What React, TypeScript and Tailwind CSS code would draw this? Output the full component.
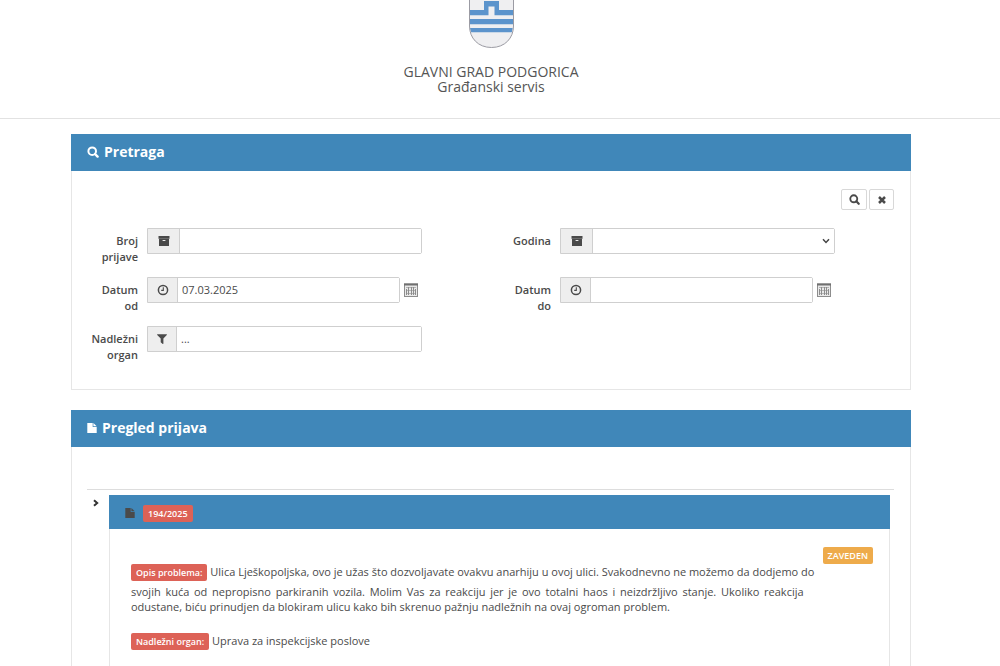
import type { ReactNode } from "react";

type FieldProps = {
  id: string;
  label: string;
  icon: ReactNode;
  children: ReactNode;
  after?: ReactNode;
};

const inputClass =
  "h-full w-full min-w-0 bg-white px-1 pb-0.5 text-[11px] text-[#4a4a4a] outline-none";

function SearchIcon({ className }: { className?: string }) {
  return (
    <svg viewBox="0 0 12 12" className={className} aria-hidden="true">
      <circle cx="5.2" cy="5.2" r="3.8" fill="none" stroke="currentColor" strokeWidth="2" />
      <path d="M8 8 10.6 10.6" stroke="currentColor" strokeWidth="2.4" strokeLinecap="round" />
    </svg>
  );
}

function CloseIcon() {
  return (
    <svg viewBox="0 0 10 10" className="size-2.5" aria-hidden="true">
      <path d="M2 2 8 8M8 2 2 8" stroke="currentColor" strokeWidth="2.5" />
    </svg>
  );
}

function ArchiveIcon() {
  return (
    <svg viewBox="0 0 12 12" className="size-3" fill="currentColor" aria-hidden="true">
      <path d="M0.5 1h11v2.8h-11z" />
      <path fillRule="evenodd" d="M1 4.1h10V11H1zM4.6 5.1v.8h2.8v-.8z" />
    </svg>
  );
}

function ClockIcon() {
  return (
    <svg viewBox="0 0 12 12" className="size-3" fill="none" stroke="currentColor" aria-hidden="true">
      <circle cx="6" cy="6" r="4.6" strokeWidth="1.5" />
      <path d="M6.3 3.2v3.2H4.2" strokeWidth="1.1" />
    </svg>
  );
}

function FilterIcon() {
  return (
    <svg viewBox="0 0 12 12" className="size-3" fill="currentColor" aria-hidden="true">
      <path d="M1.4 1.2h9.2q.7.2.2.8L7.4 5.6v5q-.1.6-.7.3L4.7 9.3V5.6L1.2 2q-.4-.6.2-.8z" />
    </svg>
  );
}

function FileIcon() {
  return (
    <svg viewBox="0 0 10 10" className="size-2.5" fill="currentColor" aria-hidden="true">
      <path d="M.3 0h5.4v3.9h4V10H.3z" />
      <path d="M6.4 0 9.7 3.2H6.4z" />
    </svg>
  );
}

function CalendarIcon() {
  return (
    <svg viewBox="0 0 14 14" className="size-3.5" aria-hidden="true">
      <rect x="0.5" y="1" width="13" height="12.5" fill="#e9e9e9" stroke="#8d8d8d" />
      <path d="M0 1.5h14" stroke="#707070" strokeWidth="2" />
      <path d="M2 4.5h10M2 7.5h10M2 10.5h10" stroke="#b5b5b5" />
      <path d="M2.5 6v6M4.5 4v8M7.5 4v8M9.5 4v8M11.5 6v6" stroke="#8d8d8d" />
    </svg>
  );
}

function Crest() {
  return (
    <svg viewBox="0 0 45 48" className="h-12 w-[45px]" role="img" aria-label="Grb Podgorice">
      <path d="M.5 0v26C.5 38 9 47.5 22.5 47.5S44.5 38 44.5 26V0z" fill="#efeff1" />
      <path
        d="M1 10h14V1h15v9h14v5.2H25.5V6.5h-6v8.7H1zM1 19h43v5.2H1zM1 28h42.7q-.3 2.2-.9 4.2H2.2Q1.3 30 1 28z"
        fill="#5c94cc"
      />
      <path d="M.5 0v26C.5 38 9 47.5 22.5 47.5S44.5 38 44.5 26V0" fill="none" stroke="#9b9ba3" />
    </svg>
  );
}

function Field({ id, label, icon, children, after }: FieldProps) {
  return (
    <div className="flex items-start gap-[9px]">
      <label htmlFor={id} className="w-[51px] shrink-0 pt-[5px] text-right font-semibold leading-4">
        {label}
      </label>
      <div className="flex min-w-0 flex-1 items-center gap-1">
        <div className="flex h-[26px] min-w-0 flex-1 rounded-r-xs border border-[#cfcfcf]">
          {icon}
          {children}
        </div>
        {after}
      </div>
    </div>
  );
}

function PanelHeader({ icon, title }: { icon: ReactNode; title: string }) {
  return (
    <h2 className="flex h-[37px] items-center gap-[5px] bg-[#4087b9] px-4 pb-0.5 text-[14px] font-bold text-white">
      {icon}
      {title}
    </h2>
  );
}

function DateButton({ label }: { label: string }) {
  return (
    <button type="button" aria-label={label} className="mr-1 shrink-0">
      <CalendarIcon />
    </button>
  );
}

const addon = "flex shrink-0 items-center justify-center border-r border-[#cfcfcf] bg-[#eeeeee]";
const tag = "inline-block rounded-xs bg-[#dd6257] px-[5px] text-[9px] font-semibold leading-[17px] text-white";

export default function App() {
  return (
    <div className="bg-white font-['Open_Sans',sans-serif] text-[11px] text-[#4a4a4a]">
      <header className="border-b border-[#e2e2e2] pr-[18px] pb-6">
        <div className="flex flex-col items-center">
          <Crest />
          <h1 className="mt-4 text-center text-[14px] leading-[15px] text-[#555555]">
            GLAVNI GRAD PODGORICA
            <br />
            Građanski servis
          </h1>
        </div>
      </header>

      <main className="pt-[15px] pr-[89px] pl-[71px]">
        <section>
          <PanelHeader icon={<SearchIcon className="size-3" />} title="Pretraga" />
          <form
            className="border-x border-b border-[#e6e6e6] pt-[18px] pr-4 pb-[26px] pl-[15px]"
            onSubmit={(e) => e.preventDefault()}
          >
            <div className="flex justify-end gap-0.5">
              <button
                type="submit"
                aria-label="Pretraži"
                className="flex h-[21px] w-[26px] items-center justify-center rounded-xs border border-[#d8d8d8]"
              >
                <SearchIcon className="size-[11px]" />
              </button>
              <button
                type="reset"
                aria-label="Poništi"
                className="flex h-[21px] w-[25px] items-center justify-center rounded-xs border border-[#d8d8d8]"
              >
                <CloseIcon />
              </button>
            </div>

            <div className="mt-[18px] grid grid-cols-2 gap-x-[78px] gap-y-3 pr-[59px]">
              <Field id="broj" label="Broj prijave" icon={<span className={`${addon} w-8`}><ArchiveIcon /></span>}>
                <input id="broj" type="text" className={inputClass} />
              </Field>
              <Field id="godina" label="Godina" icon={<span className={`${addon} w-8`}><ArchiveIcon /></span>}>
                <div className="relative h-full min-w-0 flex-1">
                  <select id="godina" className={`${inputClass} appearance-none`}>
                    <option value=""></option>
                  </select>
                  <svg viewBox="0 0 8 8" className="pointer-events-none absolute top-2 right-1 size-2" aria-hidden="true">
                    <path d="M1 2.2 4 5.4 7 2.2" fill="none" stroke="#444" strokeWidth="1.5" />
                  </svg>
                </div>
              </Field>
              <Field
                id="datum-od"
                label="Datum od"
                icon={<span className={`${addon} w-[30px]`}><ClockIcon /></span>}
                after={<DateButton label="Izaberi datum od" />}
              >
                <input id="datum-od" type="text" defaultValue="07.03.2025" className={inputClass} />
              </Field>
              <Field
                id="datum-do"
                label="Datum do"
                icon={<span className={`${addon} w-[30px]`}><ClockIcon /></span>}
                after={<DateButton label="Izaberi datum do" />}
              >
                <input id="datum-do" type="text" className={inputClass} />
              </Field>
              <Field id="organ" label="Nadležni organ" icon={<span className={`${addon} w-[29px]`}><FilterIcon /></span>}>
                <input id="organ" type="text" defaultValue="..." className={inputClass} />
              </Field>
            </div>
          </form>
        </section>

        <section className="mt-5">
          <PanelHeader icon={<FileIcon />} title="Pregled prijava" />
          <div className="border-x border-[#e6e6e6] pt-[42px] pr-4 pl-[15px]">
            <div className="flex items-start border-t border-[#dddddd] pt-[5px] pr-1">
              <button type="button" aria-label="Prikaži detalje" className="flex w-[22px] shrink-0 pt-1 pl-[5px]">
                <svg viewBox="0 0 8 8" className="size-2" aria-hidden="true">
                  <path d="M2 1.2 5.2 4 2 6.8" fill="none" stroke="#333" strokeWidth="2" />
                </svg>
              </button>
              <article className="min-w-0 flex-1">
                <h3 className="flex h-[34px] items-center gap-2 bg-[#4087b9] px-4 pt-0.5">
                  <FileIcon />
                  <span className={tag}>194/2025</span>
                </h3>
                <div className="flex items-start gap-[19px] border-x border-[#e6e6e6] pt-[18px] pr-4 pb-4 pl-[21px]">
                  <div className="min-w-0 flex-1 pt-[17px]">
                    <p className="text-justify leading-[15px]">
                      <span className="lg:whitespace-normal min-[960px]:whitespace-nowrap">
                        <span className={`${tag} mb-[3px]`}>Opis problema:</span> Ulica Lješkopoljska, ovo je užas što
                        dozvoljavate ovakvu anarhiju u ovoj ulici. Svakodnevno ne možemo da dodjemo do
                      </span>{" "}
                      svojih kuća od nepropisno parkiranih vozila. Molim Vas za reakciju jer je ovo totalni haos i
                      neizdržljivo stanje. Ukoliko reakcija odustane, biću prinudjen da blokiram ulicu kako bih skrenuo
                      pažnju nadležnih na ovaj ogroman problem.
                    </p>
                    <p className="mt-[18px] leading-[17px]">
                      <span className={tag}>Nadležni organ:</span> Uprava za inspekcijske poslove
                    </p>
                  </div>
                  <span className="shrink-0 rounded-xs bg-[#eeab4b] px-[5px] text-[9px] leading-[17px] font-semibold text-white">
                    ZAVEDEN
                  </span>
                </div>
              </article>
            </div>
          </div>
        </section>
      </main>
    </div>
  );
}
